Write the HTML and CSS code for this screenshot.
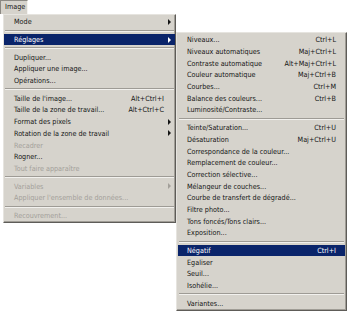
FILE: index.html
```html
<!DOCTYPE html>
<html lang="fr">
<head>
    <meta charset="UTF-8">
    <title>Menu Image</title>
    <link rel="stylesheet" href="styles.css">
</head>
<body>
    <div class="menubar">
        <span class="menubar-item open">Image</span>
    </div>

    <div class="menu menu-main">
        <div class="item"><span>Mode</span><span class="arrow"></span></div>
        <div class="sep"></div>
        <div class="item active"><span>Réglages</span><span class="arrow"></span></div>
        <div class="sep"></div>
        <div class="item"><span>Dupliquer...</span></div>
        <div class="item"><span>Appliquer une image...</span></div>
        <div class="item"><span>Opérations...</span></div>
        <div class="sep"></div>
        <div class="item"><span>Taille de l'image...</span><span class="key">Alt+Ctrl+I</span></div>
        <div class="item"><span>Taille de la zone de travail...</span><span class="key">Alt+Ctrl+C</span></div>
        <div class="item"><span>Format des pixels</span><span class="arrow"></span></div>
        <div class="item"><span>Rotation de la zone de travail</span><span class="arrow"></span></div>
        <div class="item disabled"><span>Recadrer</span></div>
        <div class="item"><span>Rogner...</span></div>
        <div class="item disabled"><span>Tout faire apparaître</span></div>
        <div class="sep"></div>
        <div class="item disabled"><span>Variables</span><span class="arrow"></span></div>
        <div class="item disabled"><span>Appliquer l'ensemble de données...</span></div>
        <div class="sep"></div>
        <div class="item disabled"><span>Recouvrement...</span></div>
    </div>

    <div class="menu menu-sub">
        <div class="item"><span>Niveaux...</span><span class="key">Ctrl+L</span></div>
        <div class="item"><span>Niveaux automatiques</span><span class="key">Maj+Ctrl+L</span></div>
        <div class="item"><span>Contraste automatique</span><span class="key">Alt+Maj+Ctrl+L</span></div>
        <div class="item"><span>Couleur automatique</span><span class="key">Maj+Ctrl+B</span></div>
        <div class="item"><span>Courbes...</span><span class="key">Ctrl+M</span></div>
        <div class="item"><span>Balance des couleurs...</span><span class="key">Ctrl+B</span></div>
        <div class="item"><span>Luminosité/Contraste...</span></div>
        <div class="sep"></div>
        <div class="item"><span>Teinte/Saturation...</span><span class="key">Ctrl+U</span></div>
        <div class="item"><span>Désaturation</span><span class="key">Maj+Ctrl+U</span></div>
        <div class="item"><span>Correspondance de la couleur...</span></div>
        <div class="item"><span>Remplacement de couleur...</span></div>
        <div class="item"><span>Correction sélective...</span></div>
        <div class="item"><span>Mélangeur de couches...</span></div>
        <div class="item"><span>Courbe de transfert de dégradé...</span></div>
        <div class="item"><span>Filtre photo...</span></div>
        <div class="item"><span>Tons foncés/Tons clairs...</span></div>
        <div class="item"><span>Exposition...</span></div>
        <div class="sep"></div>
        <div class="item active"><span>Négatif</span><span class="key">Ctrl+I</span></div>
        <div class="item"><span>Egaliser</span></div>
        <div class="item"><span>Seuil...</span></div>
        <div class="item"><span>Isohélie...</span></div>
        <div class="sep"></div>
        <div class="item"><span>Variantes...</span></div>
    </div>
</body>
</html>
```

FILE: styles.css
```css
body {
    margin: 0;
    background: #fff;
    font-family: "DejaVu Sans Condensed", "DejaVu Sans", sans-serif;
    font-stretch: condensed;
    font-size: 7.2px;
    color: #141414;
}

.menubar {
    height: 14px;
    display: flex;
}

.menubar-item {
    box-sizing: border-box;
    width: 28px;
    height: 14px;
    line-height: 12px;
    padding-left: 4px;
    background: #d6d3cc;
    border-top: 1px solid #8c8983;
    border-left: 1px solid #8c8983;
    border-right: 1px solid #f4f3f0;
}

.menu {
    position: absolute;
    box-sizing: border-box;
    background: #d6d3cc;
    border-top: 1px solid #e6e4df;
    border-left: 1px solid #e6e4df;
    border-right: 1px solid #5e5c58;
    border-bottom: 1px solid #5e5c58;
    box-shadow: inset -1px -1px 0 #a09d96;
    padding: 1px 0;
}

.menu-main {
    left: 3px;
    top: 14px;
    width: 173px;
}

.menu-sub {
    left: 176px;
    top: 32px;
    width: 171px;
    padding: 1px 1px;
}

.item {
    display: flex;
    justify-content: space-between;
    align-items: center;
    height: 11.7px;
    padding: 0 11px 0 10px;
    white-space: nowrap;
}

.menu-sub .item {
    padding: 0 9px 0 9px;
}

.item.active {
    background: #0a246a;
    color: #fff;
}

.item.disabled {
    color: #a3a09a;
}

.arrow {
    width: 0;
    height: 0;
    margin-right: -7px;
    border-left: 3px solid currentColor;
    border-top: 3px solid transparent;
    border-bottom: 3px solid transparent;
}

.sep {
    height: 6px;
    box-sizing: border-box;
    margin: 0 1px;
    padding-top: 2px;
}

.sep::before {
    content: "";
    display: block;
    border-top: 1px solid #9e9b95;
    border-bottom: 1px solid #f2f1ee;
}
```
